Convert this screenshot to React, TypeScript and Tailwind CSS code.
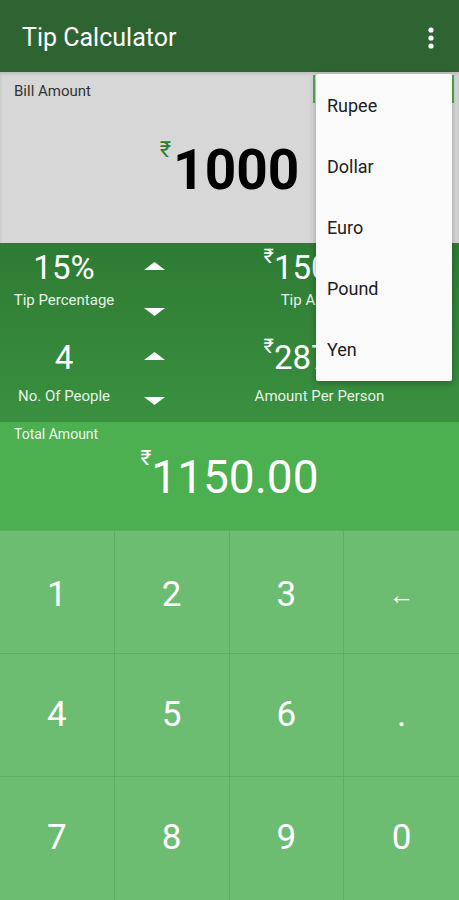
import React from "react";

const font = { fontFamily: "Roboto, 'Noto Sans', sans-serif" };

const KEYS = ["1", "2", "3", "←", "4", "5", "6", ".", "7", "8", "9", "0"];
const CURRENCIES = ["Rupee", "Dollar", "Euro", "Pound", "Yen"];

function Up() {
  return (
    <svg width="21" height="8" viewBox="0 0 21 8">
      <path d="M10.5 0 L21 8 L0 8 Z" fill="white" />
    </svg>
  );
}

function Down() {
  return (
    <svg width="21" height="8" viewBox="0 0 21 8">
      <path d="M0 0 L21 0 L10.5 8 Z" fill="white" />
    </svg>
  );
}

function StatRow({
  value,
  label,
  amount,
  amountLabel,
  gap,
}: {
  value: string;
  label: string;
  amount: string;
  amountLabel: string;
  gap: string;
}) {
  return (
    <div className="h-[89.5px] flex items-stretch">
      <div className="w-[128px] flex flex-col items-center pt-[6px]">
        <div className="text-[33px] leading-[38px] text-white">{value}</div>
        <div className={`text-[15px] leading-[18px] text-[#e6f2e6] ${gap}`}>{label}</div>
      </div>
      <div className="w-[52px] flex flex-col items-center justify-between pt-[19px] pb-[17px]">
        <Up />
        <Down />
      </div>
      <div className="flex-1 flex flex-col items-center pt-[6px]">
        <div className="flex items-start text-white">
          <span className="text-[20px] leading-[20px] mt-[-3px]">₹</span>
          <span className="text-[33px] leading-[38px]">{amount}</span>
        </div>
        <div className={`text-[15px] leading-[18px] text-[#e6f2e6] ${gap}`}>{amountLabel}</div>
      </div>
    </div>
  );
}

export default function App() {
  return (
    <div className="relative w-[459px] h-[900px] overflow-hidden bg-[#6cbd72]" style={font}>
      {/* App bar */}
      <div className="h-[72px] bg-[#2e6431] flex items-center justify-between pl-[22px] pr-[18px] pt-[3px]">
        <span className="text-white text-[25px] font-normal">Tip Calculator</span>
        <svg width="20" height="24" viewBox="0 0 20 24">
          <circle cx="10" cy="4" r="2.6" fill="white" />
          <circle cx="10" cy="12" r="2.6" fill="white" />
          <circle cx="10" cy="20" r="2.6" fill="white" />
        </svg>
      </div>

      {/* Bill amount */}
      <div className="h-[171px] bg-[#d7d7d7] shadow-[inset_0_2px_3px_rgba(0,0,0,0.12)] flex flex-col px-[14px] pt-[10px]">
        <div className="text-[15px] leading-[18px] text-[#333333]">Bill Amount</div>
        <div className="flex justify-center items-start mt-[45px]">
          <span className="text-[#2e7d32] text-[22px] leading-[22px] mt-[-6px] mr-[2px]">₹</span>
          <span className="text-[55px] leading-[50px] font-bold text-black">1000</span>
        </div>
      </div>

      {/* Tip and per person */}
      <div className="bg-gradient-to-b from-[#2e7b33] to-[#3a9040]">
        <StatRow value="15%" label="Tip Percentage" amount="150.00" amountLabel="Tip Amount" gap="mt-[4px]" />
        <StatRow value="4" label="No. Of People" amount="287.50" amountLabel="Amount Per Person" gap="mt-[10px]" />
      </div>

      {/* Total */}
      <div className="h-[108px] bg-[#4caf50] px-[14px] pt-[3px]">
        <div className="text-[14px] leading-[18px] text-[#eef7ee]">Total Amount</div>
        <div className="flex justify-center items-start mt-[11px] text-white">
          <span className="text-[21px] leading-[21px] mt-[-6px]">₹</span>
          <span className="text-[46px] leading-[46px]">1150.00</span>
        </div>
      </div>

      {/* Keypad */}
      <div className="grid grid-cols-4 grid-rows-3 h-[370px] border-t border-[#5dae63]">
        {KEYS.map((k, i) => (
          <div
            key={k}
            className={`flex items-center justify-center text-white text-[35px] border-[#5dae63] ${
              i % 4 !== 3 ? "border-r" : ""
            } ${i < 8 ? "border-b" : ""} ${i < 4 ? "pt-[6px]" : ""}`}
          >
            {k === "←" ? <span className="text-[26px]">←</span> : k}
          </div>
        ))}
      </div>

      {/* Spinner outline behind menu */}
      <div className="absolute left-[313px] top-[75px] w-[141px] h-[28px] border-x-2 border-[#4caf50]" />

      {/* Currency menu */}
      <div className="absolute left-[316px] top-[74px] w-[136px] bg-[#fafafa] rounded-[2px] shadow-[0_2px_6px_rgba(0,0,0,0.3)] py-[1px]">
        {CURRENCIES.map((c) => (
          <div key={c} className="h-[61px] flex items-center pl-[11px] text-[18px] text-[#212121]">
            {c}
          </div>
        ))}
      </div>
    </div>
  );
}
